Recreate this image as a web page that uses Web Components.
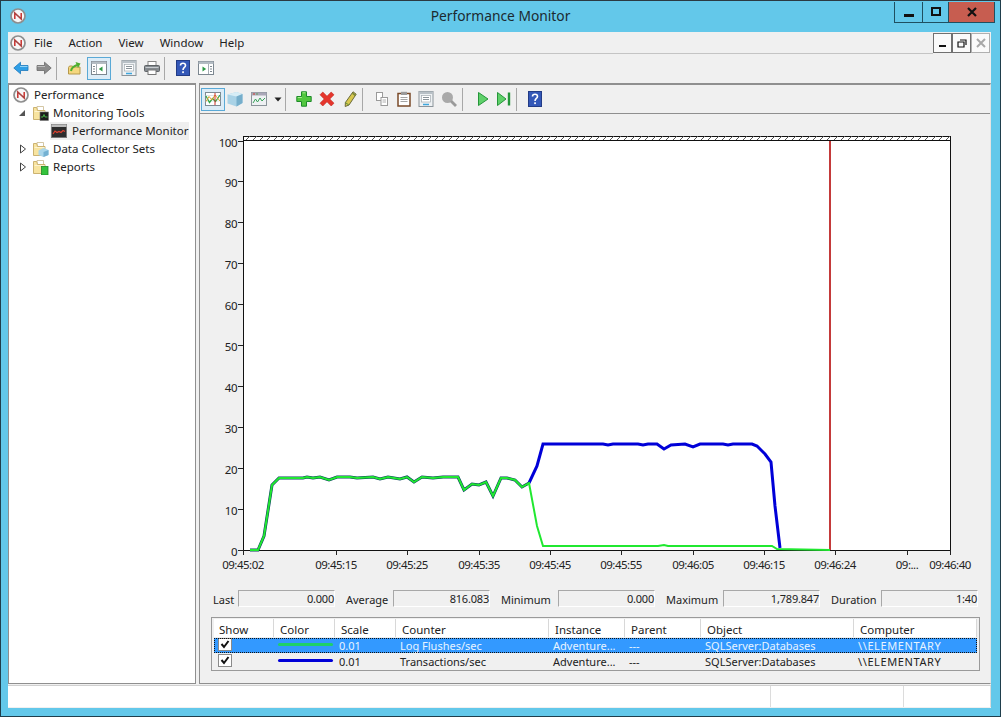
<!DOCTYPE html>
<html lang="en">
<head>
<meta charset="utf-8">
<title>Performance Monitor</title>
<style>
	html, body { margin: 0; padding: 0; background: #63c8ea; }
	body { font: 11.5px/16px "Noto Sans", "Liberation Sans", sans-serif; color: #222; }
</style>
</head>
<body>
<pm-window>
	<pm-titlebar slot="title">Performance Monitor</pm-titlebar>
	<pm-menubar>
		<span>File</span><span>Action</span><span>View</span><span>Window</span><span>Help</span>
	</pm-menubar>
	<pm-toolbar class="main">
		<pm-icon name="back" at="5"></pm-icon>
		<pm-icon name="forward" at="7"></pm-icon>
		<pm-sep at="4"></pm-sep>
		<pm-icon name="folderup" at="10"></pm-icon>
		<pm-icon name="panelleft" at="4" active></pm-icon>
		<pm-icon name="list" at="10"></pm-icon>
		<pm-icon name="print" at="7"></pm-icon>
		<pm-sep at="4"></pm-sep>
		<pm-icon name="help" at="10"></pm-icon>
		<pm-icon name="panelright" at="7"></pm-icon>
	</pm-toolbar>
	<pm-split>
		<pm-tree slot="tree">
			<pm-node icon="logo" level="0" label="Performance"></pm-node>
			<pm-node icon="foldermon" level="1" twist="open" label="Monitoring Tools"></pm-node>
			<pm-node icon="perfmon" level="2" selected label="Performance Monitor"></pm-node>
			<pm-node icon="foldercollect" level="1" twist="closed" label="Data Collector Sets"></pm-node>
			<pm-node icon="folderreport" level="1" twist="closed" label="Reports"></pm-node>
		</pm-tree>
		<pm-pane slot="pane">
			<pm-toolbar class="chart">
				<pm-icon name="chart" at="1" active></pm-icon>
				<pm-icon name="cube" at="2"></pm-icon>
				<pm-icon name="graph" at="8"></pm-icon>
				<pm-icon name="arrow" at="3"></pm-icon>
				<pm-sep at="-1"></pm-sep>
				<pm-icon name="plus" at="10"></pm-icon>
				<pm-icon name="cross" at="7"></pm-icon>
				<pm-icon name="pencil" at="7"></pm-icon>
				<pm-sep at="4"></pm-sep>
				<pm-icon name="copy" at="11"></pm-icon>
				<pm-icon name="paste" at="6"></pm-icon>
				<pm-icon name="list" at="6"></pm-icon>
				<pm-icon name="zoom" at="7"></pm-icon>
				<pm-sep at="5"></pm-sep>
				<pm-icon name="play" at="12"></pm-icon>
				<pm-icon name="next" at="5"></pm-icon>
				<pm-sep at="4"></pm-sep>
				<pm-icon name="help" at="10"></pm-icon>
			</pm-toolbar>
			<pm-chart></pm-chart>
			<pm-stats>
				<pm-stat label="Last" value="0.000" lw="25"></pm-stat>
				<pm-stat label="Average" value="816.083" lw="47"></pm-stat>
				<pm-stat label="Minimum" value="0.000" lw="57"></pm-stat>
				<pm-stat label="Maximum" value="1,789.847" lw="57"></pm-stat>
				<pm-stat label="Duration" value="1:40" lw="50"></pm-stat>
			</pm-stats>
			<pm-counters></pm-counters>
		</pm-pane>
	</pm-split>
	<pm-status></pm-status>
</pm-window>

<script>
/**
 * Icon sources, all drawn on a 16x16 box.
 */
const FOLDER = `<path d="M4 1.500h6.500V7H4z" fill="#fff" stroke="#c9b98e" stroke-width=".8"/><path d="M.5 2.500h3.200l.8 3h7.500v9H.5z" fill="#f8e4a0" stroke="#c6ac66" stroke-width=".9"/><path d="M1.500 6.500h10" stroke="#fdf3cf"/>`;
const LOGO = `<circle cx="8" cy="8" r="7" fill="#f7f7f7" stroke="#8e8e8e" stroke-width="1.700"/><path d="M4.800 11V5l6.400 6V5" fill="none" stroke="#c9302c" stroke-width="1.500"/><path d="M3.800 4.800l8.400 6.400" stroke="#6b6b6b" stroke-width=".6"/>`;
const ICONS = {
	logo: LOGO,
	back: `<path d="M.8 8L7.500 2.200v3.300H15v5H7.500v3.300z" fill="#2f9fe6" stroke="#1d78bd" stroke-width=".8"/><path d="M7 6.500h7.500" stroke="#8fd3f7"/>`,
	forward: `<path d="M15.200 8L8.500 2.200v3.300H1v5h7.500v3.300z" fill="#8c8c8c" stroke="#6a6a6a" stroke-width=".8"/><path d="M1.500 6.500H9" stroke="#bdbdbd"/>`,
	folderup: `<path d="M1.500 7.500l1-1.500h3l1 1h6.500v7H1.500z" fill="#f5d77e" stroke="#b5984a"/><path d="M4 11c.5-3 3-5 6-6" fill="none" stroke="#4fae2e" stroke-width="2"/><path d="M8.500 2l5 1.500-2.500 4.500z" fill="#4fae2e"/>`,
	panelleft: `<rect x=".5" y="1.500" width="15" height="13" fill="#fff" stroke="#7c8790"/><rect x=".5" y="1.500" width="15" height="2.500" fill="#b3bcc3"/><path d="M5.500 4v10" stroke="#a4adb4"/><path d="M2 6.500h2M2 9h2M2 11.500h2" stroke="#7d878f"/><path d="M11.500 6.500v5L7.800 9z" fill="#2e9a46"/>`,
	panelright: `<rect x=".5" y="1.500" width="15" height="13" fill="#fff" stroke="#7c8790"/><rect x=".5" y="1.500" width="15" height="2.500" fill="#b3bcc3"/><path d="M10.500 4v10" stroke="#a4adb4"/><path d="M12 6.500h2M12 9h2M12 11.500h2" stroke="#7d878f"/><path d="M4.500 6.500v5L8.200 9z" fill="#2e9a46"/>`,
	list: `<rect x="1" y=".5" width="14" height="15" fill="#eef1f3" stroke="#8b949a"/><rect x="1" y=".5" width="14" height="2.500" fill="#b8c0c6"/><rect x="3.500" y="4.500" width="9" height="6.500" fill="#fff" stroke="#a3abb1" stroke-width=".7"/><path d="M5 6.500h6M5 8.500h6" stroke="#8b949a"/><path d="M5 13.500h6" stroke="#3ea6dc" stroke-width="1.500"/>`,
	print: `<rect x="4" y="1.500" width="8" height="4" fill="#fff" stroke="#888"/><rect x=".5" y="5.500" width="15" height="6" rx="1" fill="#858b90" stroke="#5f6366"/><path d="M1.500 7.500h13" stroke="#c8ccd0"/><rect x="4" y="10" width="8" height="4.500" fill="#fff" stroke="#777"/>`,
	help: `<rect x="1.500" y=".5" width="13" height="15" fill="#3458b8" stroke="#233c86"/><path d="M5.500 5.500c0-3 5-3 5 0 0 2-2.500 2-2.500 4.500" fill="none" stroke="#fff" stroke-width="1.600"/><rect x="7.200" y="11.300" width="1.700" height="1.800" fill="#fff"/>`,
	chart: `<rect x=".5" y="1.500" width="15" height="13" fill="#fff" stroke="#7d8a94"/><path d="M.5 4.500h15M.5 10h15" stroke="#c9d0d6" stroke-width=".6"/><path d="M1 5l3.500 6.500 3-4 3 3L15 4" fill="none" stroke="#35a84a" stroke-width="1.300"/><path d="M1 10.500l3-5 3 3.500 3-5 5 6" fill="none" stroke="#e0a030"/><path d="M10 2v12" stroke="#d0302a"/>`,
	cube: `<path d="M.5 3.500l9-2.500 6 2V12l-6 3.500-9-3z" fill="#a9d2e6"/><path d="M.5 3.500L9.500 1l6 2-6 2.500z" fill="#d7edf6"/><path d="M9.500 5.500l6-2.500v9l-6 3.500z" fill="#76aecb"/>`,
	graph: `<rect x=".5" y="1.500" width="15" height="13" fill="#eef1f3" stroke="#8b949a"/><rect x=".5" y="1.500" width="15" height="3" fill="#aaa7b8"/><rect x="2" y="2.500" width="2" height="1" fill="#d0402a"/><rect x="5" y="2.500" width="2" height="1" fill="#5fa05f"/><path d="M2 12l2.500-4 2 3 2.500-4 2 3 3-3" fill="none" stroke="#3aa35a"/>`,
	arrow: `<path d="M4.500 6.500h7L8 10.500z" fill="#222"/>`,
	plus: `<path d="M5.500 .8h5v4.700h4.700v5h-4.700v4.700h-5v-4.700H.8v-5h4.700z" fill="#52c73f" stroke="#1e8a2a"/><path d="M6.500 1.800h3M1.800 6.500h4" stroke="#a8ea8e"/>`,
	cross: `<path d="M1 3.800L3.800 1 8 5.200 12.200 1 15 3.800 10.800 8l4.200 4.200-2.800 2.800L8 10.800 3.800 15 1 12.200 5.200 8z" fill="#e5352c" stroke="#c02a22" stroke-width=".6"/>`,
	pencil: `<path d="M11 .8l3.200 2.400L7 14l-3.800 1.500.2-4z" fill="#d8c84e" stroke="#6b6a3c"/><path d="M10.500 2.200l3 2.300" stroke="#7c8a3a" stroke-width="1.600"/><path d="M3.400 11.500l3.400 2.500" stroke="#5f8f3a"/>`,
	copy: `<rect x="2.500" y="1.500" width="6" height="8" fill="#fff" stroke="#9a9a9a"/><rect x="7" y="6.500" width="6.500" height="8" fill="#fff" stroke="#9a9a9a"/><path d="M8.500 9h3.500M8.500 11h3.500" stroke="#b0b0b0"/>`,
	paste: `<rect x="2" y="2.500" width="12" height="12.500" fill="#fff" stroke="#7a4a28" stroke-width="1.500"/><rect x="5" y=".8" width="6" height="3.200" fill="#9a9a9a"/><path d="M4.500 6.500h7M4.500 8.500h7M4.500 10.500h7" stroke="#a5a5a5"/>`,
	zoom: `<circle cx="6.500" cy="6.500" r="5.500" fill="#a9a9a9"/><path d="M10 10l5 5" stroke="#9a9a9a" stroke-width="2.800"/>`,
	play: `<path d="M3.500 1.500L13 8l-9.500 6.500z" fill="#5fd06a" stroke="#25963a"/>`,
	next: `<path d="M1.500 1.500L10 8l-8.500 6.500z" fill="#5fd06a" stroke="#25963a"/><path d="M13 1.500v13" stroke="#25963a" stroke-width="2.400"/>`,
	foldermon: `${FOLDER}<rect x="7" y="7" width="8.500" height="8.500" fill="#1d1d1d" stroke="#777" stroke-width=".6"/><path d="M8 12h2l1-2.500 1 2.500h2.500" fill="none" stroke="#4fd04f" stroke-width=".8"/>`,
	perfmon: `<rect x=".5" y="1.500" width="15" height="13" fill="#2d2d2d" stroke="#777"/><rect x=".5" y="1.500" width="15" height="2.500" fill="#bcbcbc"/><path d="M2 11l2-3 2 1.500 2-1 2 1 2-2 2 1" fill="none" stroke="#e0402f" stroke-width="1.200"/>`,
	foldercollect: `${FOLDER}<path d="M5.500 9.500l5-2.500 5 2v5l-5 2-5-2z" fill="#a9d5ea"/><path d="M10.500 11l5-2v5l-5 2z" fill="#74b1d2"/>`,
	folderreport: `${FOLDER}<rect x="8.500" y="7.500" width="6.500" height="8.500" fill="#35c23c" stroke="#1f8a28" stroke-width=".8"/>`
};

/**
 * Base class: sets the shadow root from a css and html string.
 */
class PmElement extends HTMLElement {
	/**
	 * @param {string} html - the markup with its style.
	 */
	fill(html) {
		if (!this.shadowRoot) {
			this.attachShadow({ mode: 'open' });
		}
		this.shadowRoot.innerHTML = html;
	}
}

class PmWindow extends PmElement {
	connectedCallback() {
		this.fill(`
		<style>
			:host { display: block; width: 1001px; height: 717px; box-sizing: border-box; overflow: hidden;
				background: #63c8ea; border: 1px solid #1f3e4c; border-top-color: #2b3a42; padding: 0 8px 8px 7px; }
			.body { display: flex; flex-direction: column; height: 676px; width: 983px; background: #f0f0f0; }
		</style>
		<slot name="title"></slot>
		<div class="body"><slot></slot></div>`);
	}
}

class PmTitlebar extends PmElement {
	connectedCallback() {
		this.fill(`
		<style>
			:host { display: flex; height: 31px; align-items: center; position: relative; }
			.logo { margin: -1px 0 0 2px; }
			.t { flex: 1; text-align: center; font-size: 13.800px; color: #1c2a30; margin: -2px 0 0 -15px; padding-right: 2px; }
			.ctl { position: absolute; right: -3px; top: 1px; display: flex; height: 21px; border: 1px solid #1f4f60; border-top: 0; box-sizing: border-box; }
			.ctl div { display: flex; align-items: center; justify-content: center; border-left: 1px solid #1f4f60; }
			.ctl div:first-child { border-left: 0; }
			.min { width: 27px; } .max { width: 25px; } .close { width: 45px; background: #c75d50; }
		</style>
		<pm-icon class="logo" name="logo"></pm-icon>
		<div class="t"><slot></slot></div>
		<div class="ctl">
			<div class="min"><svg width="12" height="12"><rect x="1" y="8" width="10" height="3" fill="#111"/></svg></div>
			<div class="max"><svg width="12" height="12"><rect x="2" y="2" width="8" height="7" fill="none" stroke="#111" stroke-width="2"/></svg></div>
			<div class="close"><svg width="12" height="12"><path d="M2 2l8 8M10 2l-8 8" stroke="#111" stroke-width="2.200"/></svg></div>
		</div>`);
	}
}

class PmMenubar extends PmElement {
	connectedCallback() {
		this.fill(`
		<style>
			:host { display: flex; height: 22px; align-items: center; box-sizing: border-box; position: relative; flex: none;
				border-bottom: 1px solid #c4c4c4; margin-right: 58px; padding-left: 2px; }
			.logo { margin-right: 8px; }
			::slotted(span) { margin-right: 16px; }
			.mdi { position: absolute; right: -57px; top: 1px; display: flex; background: #fafafa; height: 20px; }
			.mdi div { width: 19px; box-sizing: border-box; border: 1px solid #707070; display: flex; align-items: center; justify-content: center; }
			.mdi div:last-child { border-color: #b0b0b0; }
		</style>
		<pm-icon class="logo" name="logo"></pm-icon>
		<slot></slot>
		<div class="mdi">
			<div><svg width="10" height="10"><rect x="1" y="7" width="7" height="2" fill="#111"/></svg></div>
			<div><svg width="10" height="10"><path d="M3 2h6v5M1 4h6v5H1z" fill="none" stroke="#111" stroke-width="1.200"/></svg></div>
			<div><svg width="10" height="10"><path d="M1 1l8 8M9 1l-8 8" stroke="#a8a8a8" stroke-width="2"/></svg></div>
		</div>`);
	}
}

class PmToolbar extends PmElement {
	connectedCallback() {
		this.fill(`
		<style>
			:host { display: flex; height: 28px; flex: none; align-items: center; box-sizing: border-box; }
		</style>
		<slot></slot>`);
	}
}

/**
 * Toolbar separator.
 */
class PmSep extends PmElement {
	connectedCallback() {
		this.fill(`
		<style>
			:host { display: block; width: 1px; height: 23px; background: #a8a8a8; flex: none; margin-left: ${this.getAttribute('at')}px; }
		</style>`);
	}
}

/**
 * An icon; the "at" attribute is its gap from the thing before it.
 */
class PmIcon extends PmElement {
	connectedCallback() {
		const name = this.getAttribute('name');
		const active = this.hasAttribute('active');
		const at = this.getAttribute('at') || 0;
		this.fill(`
		<style>
			:host { display: flex; flex: none; align-items: center; justify-content: center; box-sizing: border-box;
				width: ${active ? 24 : 16}px; height: ${active ? 23 : 16}px; margin-left: ${at}px;
				${active ? 'background: #dcecf7; border: 1px solid #5aa9d6;' : ''} }
			svg { display: block; width: 16px; height: 16px; }
		</style>
		<svg viewBox="0 0 16 16" aria-hidden="true">${ICONS[name] || ''}</svg>`);
	}
}

class PmSplit extends PmElement {
	connectedCallback() {
		this.fill(`
		<style>
			:host { display: grid; grid-template-columns: 188px 1fr; column-gap: 3px; flex: none; height: 601px; margin-top: 1px; }
		</style>
		<slot name="tree"></slot><slot name="pane"></slot>`);
	}
}

class PmTree extends PmElement {
	connectedCallback() {
		this.fill(`
		<style>
			:host { display: flex; flex-direction: column; background: #fff; box-sizing: border-box; border: 1px solid #8f8f8f; border-width: 2px 1px 1px 1px; padding-top: 1px; height: 601px; }
		</style>
		<slot></slot>`);
	}
}

class PmNode extends PmElement {
	connectedCallback() {
		const level = Number(this.getAttribute('level'));
		const twist = this.getAttribute('twist');
		const selected = this.hasAttribute('selected');
		let arrow = '';
		if (twist === 'open') {
			arrow = '<path d="M7 2v6H1z" fill="#555"/>';
		} else if (twist === 'closed') {
			arrow = '<path d="M2.500 1l5 4-5 4z" fill="#fff" stroke="#444"/>';
		}
		this.fill(`
		<style>
			:host { display: flex; height: 18px; align-items: center; flex: none; }
			.tw { width: 9px; height: 10px; margin-left: ${level === 1 ? 9 : 0}px; margin-right: ${level === 1 ? 5 : 0}px; }
			.row { display: flex; align-items: center; height: 18px; margin-left: ${level === 2 ? 41 : level === 0 ? 3 : 0}px; padding-right: 3px;
				${selected ? 'background: #efefef; width: 135px;' : ''} padding-left: 1px; }
			pm-icon { margin-right: ${level === 1 ? 4 : 5}px; }
			span { white-space: nowrap; }
		</style>
		${level === 1 ? `<svg class="tw" viewBox="0 0 9 10">${arrow}</svg>` : ''}
		<div class="row"><pm-icon name="${this.getAttribute('icon')}"></pm-icon><span>${this.getAttribute('label')}</span></div>`);
	}
}

class PmPane extends PmElement {
	connectedCallback() {
		this.fill(`
		<style>
			:host { display: flex; flex-direction: column; box-sizing: border-box; height: 601px; border: 1px solid #8f8f8f; border-width: 2px 1px 1px 1px; border-right-color: #e4e4e4; }
		</style>
		<slot></slot>`);
	}
}

/**
 * The graph. The svg uses window coordinates through its viewBox.
 */
class PmChart extends PmElement {
	connectedCallback() {
		const green = '250,551 258,551 264,537 272,486 279,479 303,479 307,478 313,479 320,478 329,481 337,478 350,478 357,479 373,478 380,480 388,478 400,480 407,478 414,483 422,478 433,479 443,478 458,478 464,491 472,485 479,486 486,483 493,497 501,479 507,479 515,481 522,488 529,484 537,527 543,547 658,547 664,546 668,547 772,547 777,550 830,551';
		const dark = '250,551 258,551 264,537 272,486 279,479 303,479 307,478 313,479 320,478 329,481 337,478 350,478 357,479 373,478 380,480 388,478 400,480 407,478 414,483 422,478 433,479 443,478 458,478 464,491 472,485 479,486 486,483 493,497 501,479 507,479 515,481 522,488 529,484';
		const blue = '529,484 537,467 543,445 603,445 608,446 613,445 638,445 643,446 648,445 657,445 664,450 671,446 685,445 693,448 700,445 723,445 728,446 733,445 752,445 757,447 765,455 771,463 775,507 780,549';
		let ticks = '';
		for (let v = 0; v <= 100; v += 10) {
			const y = Math.round(551 - v * 4.095) + 0.5;
			ticks += `<path d="M238 ${y}h5" stroke="#222"/><text x="237" y="${y + 5}" text-anchor="end">${v}</text>`;
		}
		const times = [
			[243, '09:45:02'], [336, '09:45:15'], [407, '09:45:25'], [479, '09:45:35'], [550, '09:45:45'],
			[621, '09:45:55'], [693, '09:46:05'], [764, '09:46:15'], [835, '09:46:24'], [907, '09:...'], [950, '09:46:40']
		];
		let labels = '';
		for (const [x, text] of times) {
			labels += `<path d="M${x}.500 551v5" stroke="#222"/><text x="${x}" y="570" text-anchor="middle">${text}</text>`;
		}
		let hatch = '';
		for (let x = 246; x < 948; x += 7) {
			hatch += `M${x} 141l4-4`;
		}
		this.fill(`
		<style>
			:host { display: block; height: 475px; flex: none; border-top: 1px solid #8f8f8f; }
			svg { display: block; }
			text { font: 11.500px "Noto Sans", "Liberation Sans", sans-serif; letter-spacing: -.5px; fill: #222; }
		</style>
		<svg width="790" height="475" viewBox="200 115 790 475">
			<rect x="243.500" y="137.500" width="707" height="414" fill="#fff" stroke="#111"/>
			<path d="${hatch}" stroke="#555"/>
			<path d="M243 141.500h708" stroke="#111"/>
			${ticks}${labels}
			<rect x="829" y="142" width="2" height="409" fill="#c43a3a"/>
			<polyline points="${blue}" fill="none" stroke="#0000d8" stroke-width="3"/>
			<polyline points="${dark}" fill="none" stroke="#083a60" stroke-width="3"/>
			<polyline points="${green}" fill="none" stroke="#20e830" stroke-width="2"/>
		</svg>`);
	}
}

class PmStats extends PmElement {
	connectedCallback() {
		this.fill(`
		<style>
			:host { display: flex; height: 28px; flex: none; padding: 1px 0 0 13px; box-sizing: border-box; column-gap: 11px; align-items: flex-start; font-size: 11px; }
		</style>
		<slot></slot>`);
	}
}

class PmStat extends PmElement {
	connectedCallback() {
		this.fill(`
		<style>
			:host { display: flex; align-items: center; height: 17px; }
			label { width: ${this.getAttribute('lw')}px; white-space: nowrap; padding-top: 3px; }
			div { width: 97px; height: 17px; box-sizing: border-box; text-align: right; line-height: 16px; letter-spacing: -.2px;
				border: 1px solid #a8a8a8; border-right-color: #fff; border-bottom-color: #fff; }
		</style>
		<label>${this.getAttribute('label')}</label><div>${this.getAttribute('value')}</div>`);
	}
}

/**
 * The counter list under the graph.
 */
class PmCounters extends PmElement {
	connectedCallback() {
		const cols = '60px 61px 61px 153px 76px 76px 153px 123px';
		const heads = ['Show', 'Color', 'Scale', 'Counter', 'Instance', 'Parent', 'Object', 'Computer'];
		const rows = [
			{ color: '#1fd06a', scale: '0.01', counter: 'Log Flushes/sec', sel: true },
			{ color: '#0000d8', scale: '0.01', counter: 'Transactions/sec', sel: false }
		];
		const rowHtml = rows.map((r) => `
			<div class="row ${r.sel ? 'sel' : ''}">
				<div class="c"><span class="chk"><svg width="11" height="11" viewBox="0 0 11 11"><path d="M1.500 5l2.500 3 4.500-6" fill="none" stroke="#111" stroke-width="2"/></svg></span></div>
				<div class="c"><span class="swatch" style="background:${r.color}"></span></div>
				<div class="c">${r.scale}</div>
				<div class="c">${r.counter}</div>
				<div class="c">Adventure...</div>
				<div class="c">---</div>
				<div class="c">SQLServer:Databases</div>
				<div class="c wide">\\\\ELEMENTARY</div>
			</div>`).join('');
		this.fill(`
		<style>
			:host { display: block; margin-left: 11px; width: 769px; height: 54px; box-sizing: border-box; border: 1px solid #9a9a9a; padding: 1px 2px; flex: none; font-size: 11px; }
			.head, .row { display: grid; grid-template-columns: ${cols}; }
			.head { height: 18px; align-items: center; font-size: 11.500px; }
			.head div { padding-left: 6px; border-right: 1px solid #d8d8d8; background: #fff; height: 18px; line-height: 21px; box-sizing: border-box; }
			.head div:first-child { padding-left: 5px; }
			.row { height: 14px; line-height: 16px; align-items: start; margin-top: 1px; }
			.row .c { padding-left: 4px; white-space: nowrap; overflow: hidden; height: 15px; }
			.row .wide { letter-spacing: .6px; }
			.sel { background: #3399ff; color: #e8f4ff; outline: 1px dotted #111; outline-offset: -1px; height: 15px; }
			.chk { display: flex; width: 14px; height: 13px; background: #fff; border: 1px solid #8a8a8a; box-sizing: border-box; align-items: center; justify-content: center; }
			.swatch { display: block; width: 55px; height: 3px; border-radius: 2px; margin-top: 5px; }
		</style>
		<div class="head">${heads.map((h) => `<div>${h}</div>`).join('')}</div>
		${rowHtml}`);
	}
}

class PmStatus extends PmElement {
	connectedCallback() {
		this.fill(`
		<style>
			:host { display: grid; grid-template-columns: 763px 133px 1fr; height: 22px; background: #fff; flex: none; margin-top: 1px; border-top: 1px solid #d0d0d0; box-sizing: border-box; }
			div { border-right: 1px solid #dcdcdc; }
		</style>
		<div></div><div></div><div></div>`);
	}
}

customElements.define('pm-window', PmWindow);
customElements.define('pm-titlebar', PmTitlebar);
customElements.define('pm-menubar', PmMenubar);
customElements.define('pm-toolbar', PmToolbar);
customElements.define('pm-sep', PmSep);
customElements.define('pm-icon', PmIcon);
customElements.define('pm-split', PmSplit);
customElements.define('pm-tree', PmTree);
customElements.define('pm-node', PmNode);
customElements.define('pm-pane', PmPane);
customElements.define('pm-chart', PmChart);
customElements.define('pm-stats', PmStats);
customElements.define('pm-stat', PmStat);
customElements.define('pm-counters', PmCounters);
customElements.define('pm-status', PmStatus);
</script>
</body>
</html>
